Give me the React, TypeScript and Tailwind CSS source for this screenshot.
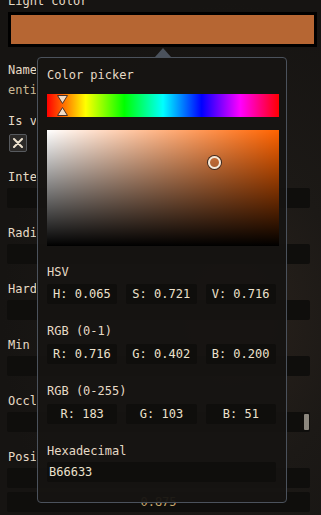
import React from "react";

const hsv = { h: 0.065, s: 0.721, v: 0.716 };

// labels on the left are covered by the picker from x = 37 on
function Label({ text, className = "" }: { text: string; className?: string }) {
  return (
    <div className={`w-[29px] overflow-hidden whitespace-nowrap pl-[1px] ${className}`}>{text}</div>
  );
}

function Field({ className = "" }: { className?: string }) {
  return <div className={`h-[20px] w-[303px] rounded-[2px] bg-[#0f0e0c] ${className}`} />;
}

function Row({ label, children }: { label: string; children?: React.ReactNode }) {
  return (
    <div className="mt-[17px] flex flex-col first:mt-0">
      <Label text={label} />
      <div className="mt-[3px]">{children ?? <Field />}</div>
    </div>
  );
}

function ValueBox({ text, center }: { text: string; center?: boolean }) {
  return (
    <div
      className={`h-[20px] rounded-[2px] bg-[#0f0e0c] leading-[20px] text-[#ece1cd] ${
        center ? "text-center" : "pl-[6px]"
      }`}
    >
      {text}
    </div>
  );
}

function ColorPicker() {
  const hueDeg = hsv.h * 360;
  return (
    <div className="absolute left-[37px] top-[57px] h-[446px] w-[250px] rounded-[4px] border border-[#4b525c] bg-[#161412]/95">
      {/* little arrow pointing at the swatch */}
      <svg className="absolute left-[117px] top-[-10px]" width="16" height="9" viewBox="0 0 16 9">
        <path d="M0 9 L8 0 L16 9 Z" fill="#4b525c" />
      </svg>

      <div className="flex flex-col pl-[9px] pt-[9px]">
        <div>Color picker</div>

        <div className="relative mt-[11px] h-[23px] w-[232px] bg-[linear-gradient(to_right,#ff0000,#ffff00,#00ff00,#00ffff,#0000ff,#ff00ff,#ff0000)]">
          <svg
            className="absolute top-0"
            style={{ left: hsv.h * 232 - 6.5 }}
            width="13"
            height="23"
            viewBox="0 0 13 23"
          >
            <path d="M1.5 1.5 L11.5 1.5 L6.5 9.5 Z" fill="#f1dcc6" stroke="#4a3228" strokeWidth="1" />
            <path d="M6.5 13.5 L11.5 21.5 L1.5 21.5 Z" fill="#f1dcc6" stroke="#4a3228" strokeWidth="1" />
          </svg>
        </div>

        <div
          className="relative mt-[13px] h-[116px] w-[232px]"
          style={{ backgroundColor: `hsl(${hueDeg}, 100%, 50%)` }}
        >
          <div className="absolute inset-0 bg-[linear-gradient(to_right,#ffffff,rgba(255,255,255,0))]" />
          <div className="absolute inset-0 bg-[linear-gradient(to_bottom,rgba(0,0,0,0),#000000)]" />
          <div
            className="absolute h-[13px] w-[13px] rounded-full border-[2.5px] border-[#f3e9da] shadow-[0_0_0_1px_#3a2a22]"
            style={{ left: hsv.s * 232 - 6.5, top: (1 - hsv.v) * 116 - 6.5 }}
          />
        </div>

        <div className="mt-[18px]">HSV</div>
        <div className="mt-[4px] grid w-[229px] grid-cols-3 gap-[9px]">
          <ValueBox text="H: 0.065" />
          <ValueBox text="S: 0.721" />
          <ValueBox text="V: 0.716" />
        </div>

        <div className="mt-[19px]">RGB (0-1)</div>
        <div className="mt-[5px] grid w-[229px] grid-cols-3 gap-[9px]">
          <ValueBox text="R: 0.716" />
          <ValueBox text="G: 0.402" />
          <ValueBox text="B: 0.200" />
        </div>

        <div className="mt-[19px]">RGB (0-255)</div>
        <div className="mt-[5px] grid w-[229px] grid-cols-3 gap-[9px]">
          <ValueBox text="R: 183" center />
          <ValueBox text="G: 103" center />
          <ValueBox text="B: 51" center />
        </div>

        <div className="mt-[19px]">Hexadecimal</div>
        <div className="mt-[3px] h-[20px] w-[229px] rounded-[2px] bg-[#0f0e0c] pl-[2px] leading-[20px] text-[#ece1cd]">
          B66633
        </div>
      </div>
    </div>
  );
}

export default function App() {
  return (
    <div className="relative h-[515px] w-[321px] overflow-hidden bg-[#171513] bg-[radial-gradient(ellipse_at_72%_62%,#2a221c_0%,#1c1916_35%,#161412_70%)] font-['DejaVu_Sans_Mono',monospace] text-[12px] leading-4 text-[#e6dac6]">
      <div className="flex flex-col px-[7px]">
        <div className="mt-[-7px] pl-[1px]">Light color</div>
        <div className="ml-[1px] mt-[3px] h-[35px] w-[309px] border-[3px] border-black bg-[#b66633]" />

        <Label text="Name" className="mt-[15px]" />
        <Label text="entity_light" className="mt-[4px] text-[#cbb894]" />

        <Label text="Is visible" className="mt-[15px]" />
        <div className="ml-[2px] mt-[5px] flex h-[18px] w-[18px] items-center justify-center rounded-[2px] border border-[#575a5e] bg-[#2c2a28]">
          <svg width="10" height="10" viewBox="0 0 10 10">
            <path d="M1 1 L9 9 M9 1 L1 9" stroke="#efe3cf" strokeWidth="2" strokeLinecap="round" />
          </svg>
        </div>

        <div className="mt-[17px] flex flex-col">
          <Row label="Intensity" />
          <Row label="Radius" />
          <Row label="Hardness" />
          <Row label="Min distance" />
          <Row label="Occlusion">
            <div className="relative h-[20px] w-[303px] rounded-[2px] bg-[#0f0e0c]">
              <div className="absolute left-[297px] top-[2px] h-[16px] w-[5px] rounded-[1px] bg-[#8c877e]" />
            </div>
          </Row>
          <Row label="Position">
            <Field />
            <div className="mt-[4px] h-[20px] w-[303px] rounded-[2px] bg-[#0f0e0c] text-center leading-[20px] text-[#c9a86c]">
              0.875
            </div>
          </Row>
        </div>
      </div>

      <ColorPicker />
    </div>
  );
}
